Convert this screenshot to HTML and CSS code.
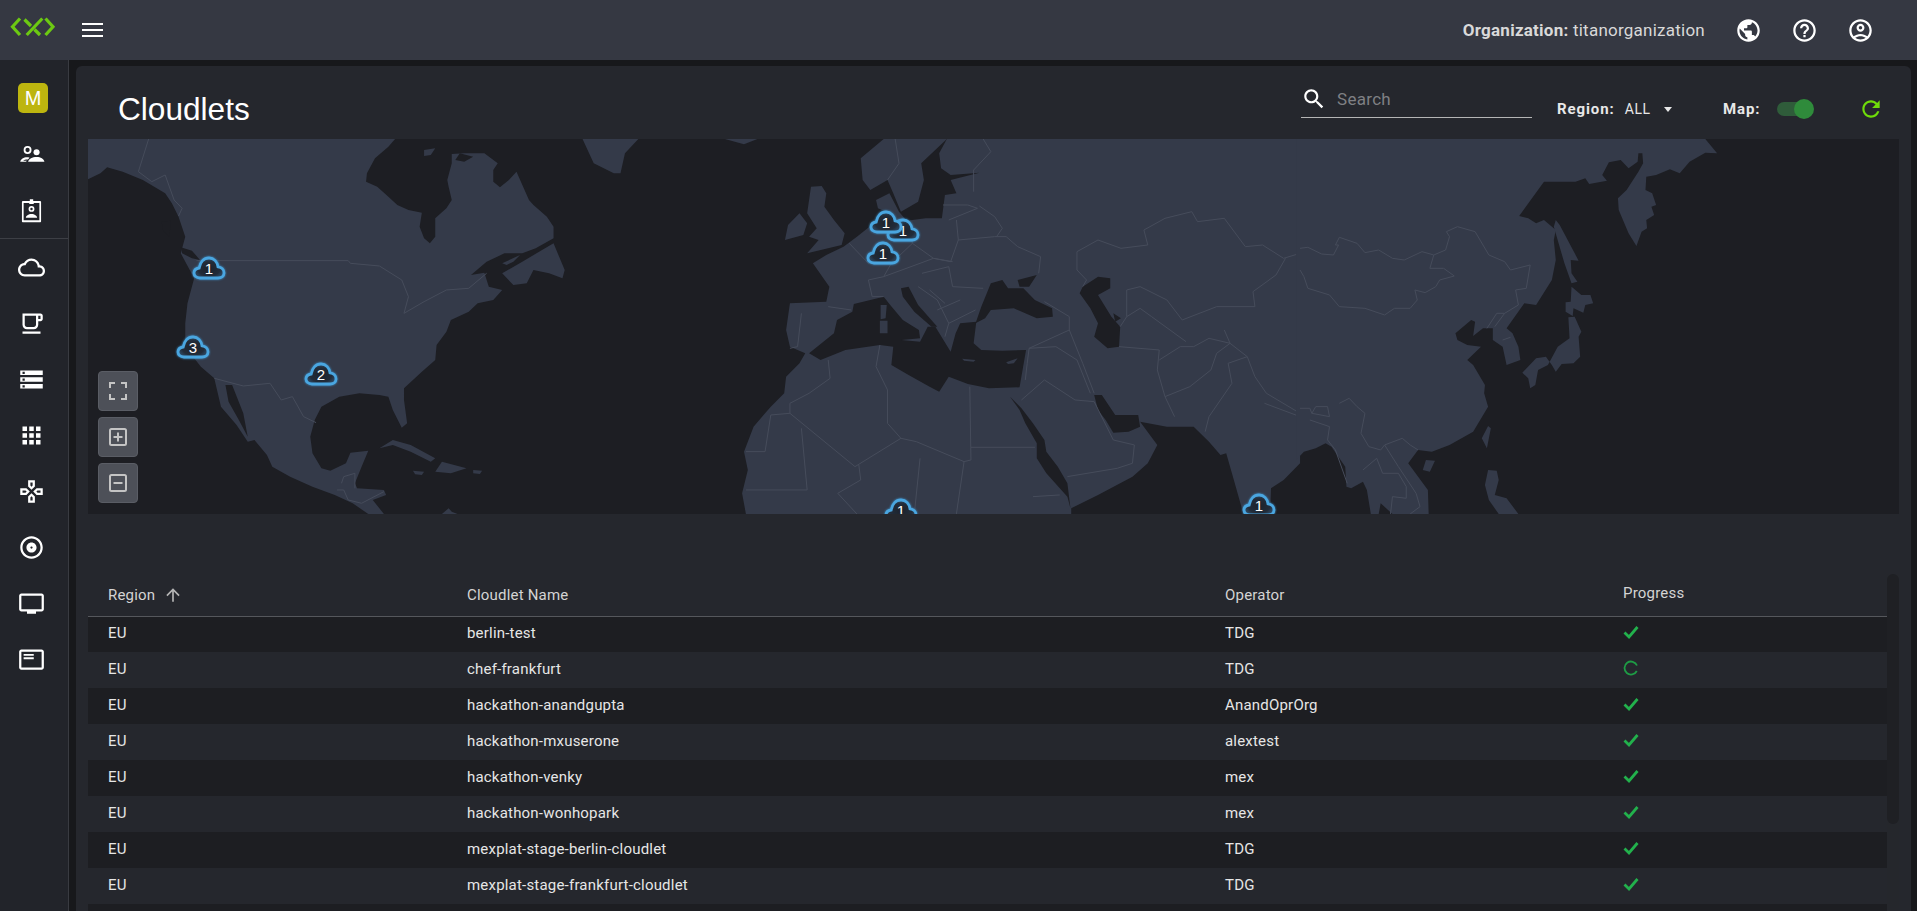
FILE: index.html
```html
<!DOCTYPE html>
<html lang="en">
<head>
<meta charset="utf-8">
<title>Cloudlets</title>
<link rel="stylesheet" href="styles.css">
</head>
<body>
<div class="app">
  <header class="topbar">
    <svg class="logo" viewBox="0 0 43 18"><path d="M9 .5 1.500 8.700 9 17M34.500 .5 42 8.700 34.500 17M13.500 1.500 20 8M23.500 11.500 29 17M15.700 17 31.300 .5"/></svg>
    <svg class="hamburger" viewBox="0 0 21 14"><path d="M0 1h21M0 7h21M0 13h21"/></svg>
    <div class="spacer"></div>
    <div class="org"><b>Organization:</b> titanorganization</div>
    <div class="top-icons">
      <svg viewBox="0 0 24 24"><path d="M12 2C6.480 2 2 6.480 2 12s4.480 10 10 10 10-4.480 10-10S17.520 2 12 2zm-1 17.930c-3.950-.49-7-3.850-7-7.930 0-.62.08-1.210.21-1.790L9 15v1c0 1.100.9 2 2 2v1.930zm6.900-2.540c-.26-.81-1-1.390-1.900-1.390h-1v-3c0-.55-.45-1-1-1H8v-2h2c.55 0 1-.45 1-1V7h2c1.100 0 2-.9 2-2v-.41c2.930 1.190 5 4.060 5 7.410 0 2.080-.8 3.970-2.100 5.390z"/></svg>
      <svg viewBox="0 0 24 24"><path d="M11 18h2v-2h-2v2zm1-16C6.480 2 2 6.480 2 12s4.480 10 10 10 10-4.480 10-10S17.520 2 12 2zm0 18c-4.410 0-8-3.590-8-8s3.590-8 8-8 8 3.590 8 8-3.590 8-8 8zm0-14c-2.210 0-4 1.790-4 4h2c0-1.100.9-2 2-2s2 .9 2 2c0 2-3 1.750-3 5h2c0-2.250 3-2.500 3-5 0-2.210-1.790-4-4-4z"/></svg>
      <svg viewBox="0 0 24 24"><path d="M12 2C6.480 2 2 6.480 2 12s4.480 10 10 10 10-4.480 10-10S17.520 2 12 2zM7.350 18.500C8.660 17.560 10.260 17 12 17s3.340.56 4.650 1.500c-1.310.94-2.910 1.500-4.650 1.500s-3.340-.56-4.650-1.500zm10.790-1.380C16.450 15.800 14.320 15 12 15s-4.450.8-6.140 2.120C4.700 15.730 4 13.950 4 12c0-4.420 3.580-8 8-8s8 3.580 8 8c0 1.950-.7 3.730-1.860 5.120zM12 6c-1.930 0-3.500 1.570-3.500 3.500S10.070 13 12 13s3.500-1.570 3.500-3.500S13.930 6 12 6zm0 5c-.83 0-1.500-.67-1.500-1.500S11.170 8 12 8s1.500.67 1.500 1.500S12.830 11 12 11z"/></svg>
    </div>
  </header>
  <div class="body">
    <nav class="sidebar">
      <div class="nav-group">
        <div class="nav-item nav-badge"><span class="badge">M</span></div>
        <div class="nav-item"><svg viewBox="0 0 24 24"><circle cx="8.500" cy="8" r="2.700" class="ring"/><circle cx="16.500" cy="10" r="2.700"/><path d="M2 18.500c.3-2.300 3-4 6-4 .8 0 1.600.1 2.300.4L8.800 16.500c-2 0-3.700.4-4.200 1H8l-1 1H2zM9 18.500c.5-2.700 3.800-4.300 7.500-4.300s6.500 1.600 7 4.300H9z"/></svg></div>
        <div class="nav-item"><svg viewBox="0 0 24 24"><path d="M10.500 3.500V2h3v1.500h6c.6 0 1 .4 1 1v17c0 .6-.4 1-1 1h-15c-.6 0-1-.4-1-1v-17c0-.6.4-1 1-1h6zM5 5.300v15.400h14V5.300h-5v1h-4v-1H5zm7 2.700a2.600 2.600 0 1 1 0 5.200 2.600 2.600 0 0 1 0-5.200zm0 1.500a1.100 1.100 0 1 0 0 2.200 1.100 1.100 0 0 0 0-2.200zM7 18.500c0-2 2.300-3.500 5-3.500s5 1.500 5 3.500H7z"/></svg></div>
      </div>
      <div class="nav-group">
        <div class="nav-item"><svg viewBox="0 0 24 24"><path d="M19.350 10.040C18.670 6.590 15.640 4 12 4 9.110 4 6.600 5.640 5.350 8.040 2.340 8.360 0 10.910 0 14c0 3.310 2.690 6 6 6h13c2.760 0 5-2.240 5-5 0-2.640-2.050-4.780-4.650-4.960zM19 18H6c-2.210 0-4-1.790-4-4s1.790-4 4-4h.71C7.370 7.690 9.480 6 12 6c3.040 0 5.500 2.460 5.500 5.500v.5H19c1.660 0 3 1.340 3 3s-1.340 3-3 3z"/></svg></div>
        <div class="nav-item"><svg viewBox="0 0 24 24"><path d="M20 3H4v10c0 2.210 1.790 4 4 4h6c2.210 0 4-1.790 4-4v-3h2c1.110 0 2-.9 2-2V5c0-1.110-.89-2-2-2zm-4 10c0 1.100-.9 2-2 2H8c-1.100 0-2-.9-2-2V5h10v8zm4-5h-2V5h2v3zM4 19h16v2H4z"/></svg></div>
        <div class="nav-item"><svg viewBox="0 0 24 24"><path d="M2 20h20v-4H2v4zm2-3h2v2H4v-2zM2 4v4h20V4H2zm4 3H4V5h2v2zm-4 7h20v-4H2v4zm2-3h2v2H4v-2z"/></svg></div>
        <div class="nav-item"><svg viewBox="0 0 24 24"><path d="M4 8h4V4H4v4zm6 12h4v-4h-4v4zm-6 0h4v-4H4v4zm0-6h4v-4H4v4zm6 0h4v-4h-4v4zm6-10v4h4V4h-4zm-6 4h4V4h-4v4zm6 6h4v-4h-4v4zm0 6h4v-4h-4v4z"/></svg></div>
        <div class="nav-item"><svg viewBox="0 0 24 24"><path d="M15 7.500V2H9v5.500l3 3 3-3zm-2-.83l-1 1-1-1V4h2v2.670zM7.500 9H2v6h5.500l3-3-3-3zm-.83 4H4v-2h2.670l1 1-1 1zM9 16.500V22h6v-5.500l-3-3-3 3zm4 3.500h-2v-2.670l1-1 1 1V20zm3.500-11l-3 3 3 3H22V9h-5.500zm3.500 4h-2.670l-1-1 1-1H20v2z"/></svg></div>
        <div class="nav-item"><svg viewBox="0 0 24 24"><path d="M12 2C6.480 2 2 6.480 2 12s4.480 10 10 10 10-4.480 10-10S17.520 2 12 2zm0 18c-4.410 0-8-3.590-8-8s3.590-8 8-8 8 3.590 8 8-3.590 8-8 8zm0-12.500c-2.490 0-4.500 2.010-4.500 4.500s2.010 4.500 4.500 4.500 4.500-2.010 4.500-4.500-2.010-4.500-4.500-4.500zm0 5.500c-.55 0-1-.45-1-1s.45-1 1-1 1 .45 1 1-.45 1-1 1z"/></svg></div>
        <div class="nav-item"><svg viewBox="0 0 24 24"><path d="M21 3H3c-1.100 0-2 .9-2 2v12c0 1.100.9 2 2 2h5v2h8v-2h5c1.100 0 1.990-.9 1.990-2L23 5c0-1.100-.9-2-2-2zm0 14H3V5h18v12z"/></svg></div>
        <div class="nav-item"><svg viewBox="0 0 24 24"><path d="M21 3H3c-1.100 0-2 .9-2 2v14c0 1.100.9 2 2 2h18c1.100 0 2-.9 2-2V5c0-1.100-.9-2-2-2zm0 16H3V5h18v14zM5 7h9v1.700H5zM5 10h9v1.700H5z"/></svg></div>
      </div>
    </nav>
    <main class="panel">
      <div class="toolbar">
        <h1 class="title">Cloudlets</h1>
        <div class="search">
          <svg viewBox="0 0 24 24"><path d="M15.500 14h-.79l-.28-.27C15.410 12.590 16 11.110 16 9.500 16 5.910 13.090 3 9.500 3S3 5.910 3 9.500 5.910 16 9.500 16c1.610 0 3.090-.59 4.230-1.570l.27.28v.79l5 4.990L20.490 19l-4.990-5zm-6 0C7.010 14 5 11.990 5 9.500S7.010 5 9.500 5 14 7.010 14 9.500 11.990 14 9.500 14z"/></svg>
          <span>Search</span>
        </div>
        <div class="filter region"><b>Region:</b><span>ALL</span><i class="caret"></i></div>
        <div class="filter map-toggle"><b>Map:</b><i class="switch"></i></div>
        <svg class="refresh" viewBox="0 0 24 24"><path d="M17.650 6.350C16.200 4.900 14.210 4 12 4c-4.420 0-7.990 3.580-7.990 8s3.570 8 7.990 8c3.730 0 6.840-2.550 7.730-6h-2.080c-.82 2.330-3.040 4-5.650 4-3.310 0-6-2.690-6-6s2.690-6 6-6c1.660 0 3.140.69 4.220 1.780L13 11h7V4l-2.350 2.350z"/></svg>
      </div>
      <section class="map">
        <svg class="world" viewBox="88 139 1811 375" preserveAspectRatio="none">
          <g transform="translate(0 130) scale(.4464 .3333)">
            <path class="land" d="M197 148 197 27 885 27 870 50 840 85 822 130 820 155 845 170 870 200 890 225 915 240 945 248 940 290 950 325 963 340 975 320 975 265 1000 235 1012 210 1005 170 1002 150 1012 100 1012 72 1040 70 1085 70 1115 100 1105 120 1105 155 1120 172 1140 150 1157 125 1185 210 1195 225 1225 260 1240 290 1240 325 1200 355 1170 370 1130 370 1090 395 1055 435 1085 428 1095 470 1125 480 1105 510 1070 520 1050 545 1010 570 1000 605 978 645 975 690 945 725 905 775 905 810 912 880 900 893 880 840 870 800 850 795 805 790 760 800 720 830 705 870 695 920 700 970 720 1015 740 1022 775 1000 785 968 825 962 810 1010 795 1060 800 1075 860 1080 865 1095 835 1110 860 1152 825 1152 790 1120 750 1095 700 1070 650 1040 610 1010 598 975 570 930 555 935 530 885 495 830 480 745 450 710 415 650 415 580 420 520 435 445 405 370 415 320 400 260 385 220 370 190 320 150 275 125 240 112 225 130Z"/>
            <path class="land" d="M1305 27 1430 27 1400 70 1390 130 1375 130 1330 100ZM850 955 880 930 920 945 975 985 965 995 920 965 880 945ZM975 1025 990 995 1045 1015 1010 1030ZM1060 1020 1080 1022 1075 1032 1060 1030ZM925 1022 950 1025 945 1035 930 1033ZM990 1152 1005 1135 1012 1145 1025 1152ZM1125 400 1165 375 1150 395 1135 405ZM950 60 975 55 965 75 950 78ZM1170 395 1240 340 1265 420 1260 445 1230 430 1195 420 1180 460 1150 465 1125 430Z"/>
            <path class="sea" d="M505 765 520 765 545 850 555 920 535 870 512 815ZM362 275 382 272 380 322 365 300ZM405 352 430 362 448 390 430 385 408 370ZM1030 70 1060 80 1040 95 1020 90Z"/>
            <path class="border" d="M333 27 310 125 340 155 370 135 390 210 408 235 400 258M440 392 780 392 785 400 850 408 900 450 915 500 905 550 950 515 1000 480 1050 475 1090 430M480 745 545 768 605 760 630 810 655 800 680 860 708 878M770 1040 795 1030 795 1075M755 1080 770 1080 780 1110M780 1110 810 1120 860 1085M770 1040 765 1060"/>
          </g>
          <g transform="translate(700 130) scale(.3827 .3333)">
            <path class="land" d="M480 27 420 85 425 150 445 180 490 150 505 190 525 245 570 215 585 150 578 100 645 27ZM65 27 150 27 115 43ZM290 170 318 168 330 190 325 230 350 270 378 310 370 345 280 370 310 330 285 320 305 295 280 250ZM222 330 230 285 260 250 280 280 270 315Z"/>
            <path class="land" d="M645 27 1568 27 1568 1000 1525 1050 1492 1075 1490 1152 1420 1152 1395 1050 1375 970 1360 975 1330 935 1290 890 1220 890 1150 875 1195 945 1170 1000 1130 1040 1040 1095 970 1135 970 1152 120 1152 110 1090 125 1020 115 965 140 890 185 830 220 790 225 740 260 700 275 670 235 650 225 600 235 520 330 515 338 470 295 400 330 375 375 350 410 320 465 270 495 250 465 235 460 210 495 190 520 245 540 272 590 265 632 265 640 195 670 190 655 150 730 128 655 135 630 115 625 70Z"/>
            <path class="sea" d="M285 670 350 610 358 570 398 545 402 522 480 500 497 525 530 570 572 600 575 625 527 630 575 635 595 590 615 590 655 665 668 610 680 580 722 575 715 640 735 660 790 662 852 660 835 772 755 775 700 762 650 740 625 785 600 770 545 735 500 705 505 650 470 645 380 660 315 690Z"/>
            <path class="land" d="M472 525 488 525 485 565 472 568ZM470 572 490 572 490 610 470 610ZM800 697 830 685 820 700 805 702ZM685 686 720 690 715 695 690 692Z"/>
            <path class="sea" d="M525 475 545 470 570 525 620 590 605 590 560 545 530 500ZM735 530 760 460 790 450 805 475 845 475 875 510 920 535 922 560 880 565 820 535 760 540 745 565 720 580ZM830 450 880 435 860 470 835 470ZM1000 470 1040 440 1072 445 1072 475 1040 495 1075 560 1098 590 1095 650 1065 655 1030 620 1040 580 1020 535 992 490ZM1080 550 1100 565 1085 575ZM1030 795 1050 795 1085 855 1145 855 1150 890 1120 905 1080 908 1060 870 1040 840ZM810 800 840 835 870 880 900 930 905 965 935 1010 960 1060 968 1135 960 1100 905 1030 880 985 880 940 850 880 835 840Z"/>
            <path class="border" d="M510 27 520 100 490 150M740 27 760 65 715 120 715 185M635 225 700 225 725 235 650 270M545 270 555 340 610 385 655 395 675 330 670 270M675 330 770 320 800 320 830 350 890 380 885 430M730 228 770 260 790 295 775 320M985 365 1040 330 1100 355 1170 345 1160 300 1215 265 1285 245 1300 275 1370 265 1425 350 1470 345 1525 385 1568 370M985 365 985 420 1010 450 1000 470M1115 480 1150 470 1220 510 1260 570 1350 530 1450 530 1445 485 1505 435 1530 385M1115 480 1115 560 1150 535 1180 560 1270 635M1115 560 1098 590M965 600 1000 700 1030 790M1095 650 1200 660 1195 720 1215 800 1240 860M1200 690 1255 650 1290 650 1330 625 1385 640 1350 670 1335 720 1280 770 1215 800M1430 680 1380 700 1390 760 1330 860 1320 905M1370 600 1385 640 1430 680 1450 740 1480 790 1568 850M1475 820 1568 860M900 515 965 560 965 600 860 655 855 700 850 750M860 655 930 650 985 690 1020 790M840 810 900 750 980 810 1030 815 1080 930 1135 945 1130 1000 1090 1015 960 1040M335 690 340 745 285 790 235 820 235 850 405 1010 525 925 565 935 690 995 708 990 705 770M470 645 460 710 490 780 490 880 525 925M708 952 875 952M265 895 280 1080 120 1080M235 850 185 855 170 965 120 965M415 1005 420 1050 360 1090 410 1152M575 985 560 1152M690 995 670 1152M870 1100 940 1095M390 340 440 400 500 400 480 440 440 450 450 500 480 500M500 400 555 340M335 530 395 540M265 550 255 650 235 655M480 440 575 400 610 385 660 395M580 430 650 410 660 470 740 475M570 470 620 510 650 580 720 540M600 480 640 520M620 540 680 510M650 580 640 620"/>
          </g>
          <g transform="translate(1300 130) scale(.3935 .3333)">
            <path class="land" d="M-10 27 1030 27 1060 70 1030 68 990 95 965 130 940 118 905 135 880 140 878 180 895 190 905 225 893 230 900 255 880 270 882 295 868 305 855 348 835 310 810 240 808 205 830 180 860 125 872 100 870 70 860 70 858 95 835 115 815 90 785 97 768 135 780 152 735 162 725 145 700 155 620 155 557 258 580 265 600 280 620 270 650 300 645 330 650 390 640 450 600 525 570 520 525 595 540 610 555 650 560 690 525 705 515 650 490 630 490 595 465 595 440 618 445 575 435 570 395 610 400 630 425 645 460 650 425 690 440 705 470 765 468 790 478 830 440 905 380 945 335 965 300 960 275 1000 325 1080 327 1152 235 1152 205 1120 200 1152 180 1152 170 1080 160 1055 130 1075 118 1070 115 1010 80 950 65 940 40 955 10 965 -10 990Z"/>
            <path class="land" d="M650 270 660 285 708 392 688 390 690 430 705 455 690 460 672 400 645 290ZM690 470 715 495 738 495 745 520 725 525 720 548 695 535 693 558 675 545 675 517 688 515ZM682 562 698 560 715 605 708 620 712 680 695 700 665 702 650 725 640 705 625 680 600 685 565 728 580 745 585 775 598 765 605 720 630 705 655 650 685 625ZM320 990 343 992 330 1025 312 1020ZM478 888 485 895 475 955 462 925ZM478 1020 500 1022 505 1050 495 1095 525 1105 555 1152 505 1152 480 1110 470 1065Z"/>
            <path class="border" d="M0 355 20 352 55 372 85 375 98 345 90 345 100 322 145 340 165 368 200 360 235 385 265 390 310 365 340 375 370 360 380 320 372 305 400 290 445 305 480 375 520 395 535 420 585 405 575 475 548 480 555 525 520 550 500 550 475 595M340 375 330 415 365 415 392 438 355 450 345 470 318 488 292 480 298 510 280 535 240 535 215 555 165 535 100 530 75 495 20 475 10 440 0 420M0 835 25 835 30 850 75 860 70 830 40 830 30 850M100 820 125 805 145 830 165 850 155 910 175 950 205 960 215 945 260 925 280 945 300 960M25 870 75 890 70 930 90 960 120 1060M160 1020 195 985 210 1030 250 1030 270 1070 270 1105 235 1100 230 1152M215 945 250 1010 295 1090 305 1130 280 1152M495 590 520 550M515 630 535 622"/>
          </g>
        </svg>
        <div class="pin pin-la"><svg viewBox="0 0 34 24"><use href="#cloud"/></svg><span>3</span></div>
        <div class="pin pin-sea"><svg viewBox="0 0 34 24"><use href="#cloud"/></svg><span>1</span></div>
        <div class="pin pin-tx"><svg viewBox="0 0 34 24"><use href="#cloud"/></svg><span>2</span></div>
        <div class="pin pin-ber"><svg viewBox="0 0 34 24"><use href="#cloud"/></svg><span>1</span></div>
        <div class="pin pin-ham"><svg viewBox="0 0 34 24"><use href="#cloud"/></svg><span>1</span></div>
        <div class="pin pin-fra"><svg viewBox="0 0 34 24"><use href="#cloud"/></svg><span>1</span></div>
        <div class="pin pin-afr"><svg viewBox="0 0 34 24"><use href="#cloud"/></svg><span>1</span></div>
        <div class="pin pin-ind"><svg viewBox="0 0 34 24"><use href="#cloud"/></svg><span>1</span></div>
        <div class="map-controls">
          <button class="ctrl"><svg viewBox="0 0 18 18"><path d="M1 6V1h5M12 1h5v5M17 12v5h-5M6 17H1v-5"/></svg></button>
          <button class="ctrl"><svg viewBox="0 0 18 18"><rect x="1" y="1" width="16" height="16" rx="1.500"/><path d="M9 4.500v9M4.500 9h9"/></svg></button>
          <button class="ctrl"><svg viewBox="0 0 18 18"><rect x="1" y="1" width="16" height="16" rx="1.500"/><path d="M4.500 9h9"/></svg></button>
        </div>
      </section>
      <svg class="defs" width="0" height="0"><defs>
        <radialGradient id="cloudfill" cx=".5" cy=".55" r=".6"><stop offset="0" stop-color="#1c222c"/><stop offset=".6" stop-color="#222c39"/><stop offset="1" stop-color="#33597c"/></radialGradient>
        <path id="cloud" d="M8 22C4.400 22 2 19.800 2 17c0-2.800 2.200-4.600 5.200-5C8.200 6 12 2 17 2s8.400 4 9 8.800c3.400.3 6 3 6 6.200 0 3-2.600 5-6 5Z" fill="url(#cloudfill)" stroke="#4aa6e0" stroke-width="2.800"/>
      </defs></svg>
      <div class="table-area">
        <div class="table-wrap">
          <table class="grid">
            <colgroup><col class="c1"><col class="c2"><col class="c3"><col class="c4"></colgroup>
            <thead><tr><th>Region <svg class="sort" viewBox="0 0 24 24"><path d="M4 12l1.410 1.410L11 7.830V20h2V7.830l5.580 5.590L20 12l-8-8-8 8z"/></svg></th><th>Cloudlet Name</th><th>Operator</th><th class="progress-head">Progress</th></tr></thead>
            <tbody>
              <tr><td>EU</td><td>berlin-test</td><td>TDG</td><td><svg class="ok" viewBox="0 0 16 16"><path d="M1.500 8.500 6 13 14.500 3"/></svg></td></tr>
              <tr><td>EU</td><td>chef-frankfurt</td><td>TDG</td><td><svg class="spin" viewBox="0 0 16 16"><path d="M14 5.500A6.500 6.500 0 1 0 13.800 11"/></svg></td></tr>
              <tr><td>EU</td><td>hackathon-anandgupta</td><td>AnandOprOrg</td><td><svg class="ok" viewBox="0 0 16 16"><path d="M1.500 8.500 6 13 14.500 3"/></svg></td></tr>
              <tr><td>EU</td><td>hackathon-mxuserone</td><td>alextest</td><td><svg class="ok" viewBox="0 0 16 16"><path d="M1.500 8.500 6 13 14.500 3"/></svg></td></tr>
              <tr><td>EU</td><td>hackathon-venky</td><td>mex</td><td><svg class="ok" viewBox="0 0 16 16"><path d="M1.500 8.500 6 13 14.500 3"/></svg></td></tr>
              <tr><td>EU</td><td>hackathon-wonhopark</td><td>mex</td><td><svg class="ok" viewBox="0 0 16 16"><path d="M1.500 8.500 6 13 14.500 3"/></svg></td></tr>
              <tr><td>EU</td><td>mexplat-stage-berlin-cloudlet</td><td>TDG</td><td><svg class="ok" viewBox="0 0 16 16"><path d="M1.500 8.500 6 13 14.500 3"/></svg></td></tr>
              <tr><td>EU</td><td>mexplat-stage-frankfurt-cloudlet</td><td>TDG</td><td><svg class="ok" viewBox="0 0 16 16"><path d="M1.500 8.500 6 13 14.500 3"/></svg></td></tr>
              <tr><td></td><td></td><td></td><td></td></tr>
            </tbody>
          </table>
        </div>
        <div class="scroll-track"><div class="scroll-thumb"></div></div>
      </div>
    </main>
  </div>
</div>
</body>
</html>
```
FILE: styles.css
```css
* { box-sizing: border-box; }
html, body { margin: 0; height: 100%; overflow: hidden; }
body { background: #17181b; font-family: Roboto, "Liberation Sans", sans-serif; color: #e6e6e6; }
.app { display: flex; flex-direction: column; height: 911px; overflow: hidden; }

.topbar { flex: 0 0 60px; display: flex; align-items: center; background: #353842; padding-left: 11px; }
.logo { width: 43px; height: 18px; margin-top: -6px; fill: none; stroke: #6cc912; stroke-width: 3.200; overflow: visible; }
.hamburger { width: 21px; height: 14px; margin-left: 28px; fill: none; stroke: #fff; stroke-width: 2; }
.spacer { flex: 1; }
.org { font-size: 17px; letter-spacing: .24px; color: #d9d9d9; margin-right: 30px; }
.org b { font-weight: 700; }
.top-icons { display: flex; gap: 29px; margin-right: 43px; }
.top-icons svg { width: 27px; height: 27px; fill: #fff; display: block; }

.body { flex: 1; display: flex; min-height: 0; }
.sidebar { flex: 0 0 69px; background: #22242a; border-right: 1px solid #393b41; padding-top: 10px; }
.nav-group + .nav-group { border-top: 1px solid #3d3f45; }
.nav-item { height: 56px; display: flex; align-items: center; justify-content: center; padding-right: 6px; }
.nav-badge { padding-right: 2px; }
.nav-item svg { width: 27px; height: 27px; fill: #fff; }
.nav-item .ring { fill: none; stroke: #fff; stroke-width: 1.600; }
.badge { width: 30px; height: 30px; border-radius: 5px; background: #bdb50f; color: #fff; font: 20px/30px "Liberation Sans", sans-serif; text-align: center; }

.panel { flex: 1; min-width: 0; margin: 6px 6px 0 7px; background: #25272d; border-radius: 6px 6px 0 0; display: flex; flex-direction: column; padding: 0 12px; }
.toolbar { flex: 0 0 73px; display: flex; align-items: center; }
.title { margin: 0 0 0 30px; font: 400 31.600px/1 "Liberation Sans", sans-serif; color: #fff; flex: 1; padding-top: 15px; }
.search { align-self: flex-start; width: 231px; height: 42px; margin-top: 10px; padding-top: 5px; border-bottom: 1px solid #b5b5b5; display: flex; align-items: center; gap: 10px; font-size: 17px; letter-spacing: .3px; color: #7f8084; }
.search svg { width: 26px; height: 26px; fill: #fff; }
.filter { display: flex; align-items: center; font-size: 14px; color: #e8e8e8; padding-top: 13px; }
.filter b { font-size: 15px; font-weight: 700; letter-spacing: .9px; }
.region { margin-left: 25px; width: 166px; }
.region span { margin-left: 10px; letter-spacing: .6px; }
.caret { width: 0; height: 0; margin-left: 13px; border: 4.500px solid transparent; border-top: 5px solid #e8e8e8; border-bottom: 0; }
.map-toggle { width: 136px; }
.switch { position: relative; width: 32px; height: 14px; margin-left: 17px; border-radius: 7px; background: #2f5c3a; }
.switch::after { content: ""; position: absolute; right: -5px; top: -3px; width: 20px; height: 20px; border-radius: 50%; background: #2f8b3b; }
.refresh { width: 26px; height: 26px; fill: #6fdc0a; margin: 13px 15px 0 -1px; }

.map { flex: 0 0 375px; position: relative; overflow: hidden; background: #1d1e23; }
.world { display: block; width: 100%; height: 100%; }
.land { fill: #343a49; }
.sea { fill: #1d1e23; }
.border { fill: none; stroke: #464c5b; stroke-width: 1; vector-effect: non-scaling-stroke; }

.pin { position: absolute; width: 34px; height: 24px; margin: -12px 0 0 -17px; }
.pin svg { position: absolute; inset: 0; width: 100%; height: 100%; overflow: visible; filter: blur(.6px) drop-shadow(0 0 1px #3f97d2); }
.pin span { position: absolute; inset: 1px 0 0 0; text-align: center; font: 15px/24px "Liberation Sans", sans-serif; color: #fff; }
.pin-sea { left: 121px; top: 129px; }
.pin-la { left: 105px; top: 208px; }
.pin-tx { left: 233px; top: 235px; }
.pin-ber { left: 815px; top: 91px; }
.pin-ham { left: 798px; top: 83px; }
.pin-fra { left: 795px; top: 114px; }
.pin-afr { left: 813px; top: 371px; }
.pin-ind { left: 1171px; top: 366px; }

.map-controls { position: absolute; left: 10px; top: 232px; display: flex; flex-direction: column; gap: 6px; }
.ctrl { width: 40px; height: 40px; padding: 0; background: #4d5058; border: 1px solid #5a5d65; border-radius: 4px; display: flex; align-items: center; justify-content: center; }
.ctrl svg { width: 18px; height: 18px; fill: none; stroke: #c4c4c4; stroke-width: 2; }

.defs { position: absolute; }
.table-area { flex: 1; min-height: 0; margin-top: 60px; display: flex; }
.table-wrap { flex: 1; min-width: 0; overflow: hidden; }
.grid { width: 100%; border-collapse: collapse; table-layout: fixed; font-size: 15px; letter-spacing: .2px; }
.c1 { width: 359px; }
.c2 { width: 758px; }
.c3 { width: 398px; }
.grid th { height: 42px; padding: 0 0 0 20px; text-align: left; font-weight: 400; color: #d4d4d4; border-bottom: 1px solid #55575c; vertical-align: middle; }
.grid .progress-head { padding-bottom: 3px; }
.grid td { height: 36px; padding: 0 0 2px 20px; color: #e6e6e6; }
.grid tbody tr:nth-child(odd) { background: #1d1e22; }
.sort { width: 20px; height: 20px; fill: #b5b5b5; vertical-align: -5px; margin-left: 4px; }
.ok { width: 16px; height: 16px; fill: none; stroke: #22b14c; stroke-width: 2.800; vertical-align: -1px; }
.spin { width: 16px; height: 16px; fill: none; stroke: #1e9c45; stroke-width: 1.800; vertical-align: -1px; }
.scroll-track { flex: 0 0 12px; height: 100%; background: #25272c; }
.scroll-thumb { height: 250px; background: #1f2024; border-radius: 6px; }
```
